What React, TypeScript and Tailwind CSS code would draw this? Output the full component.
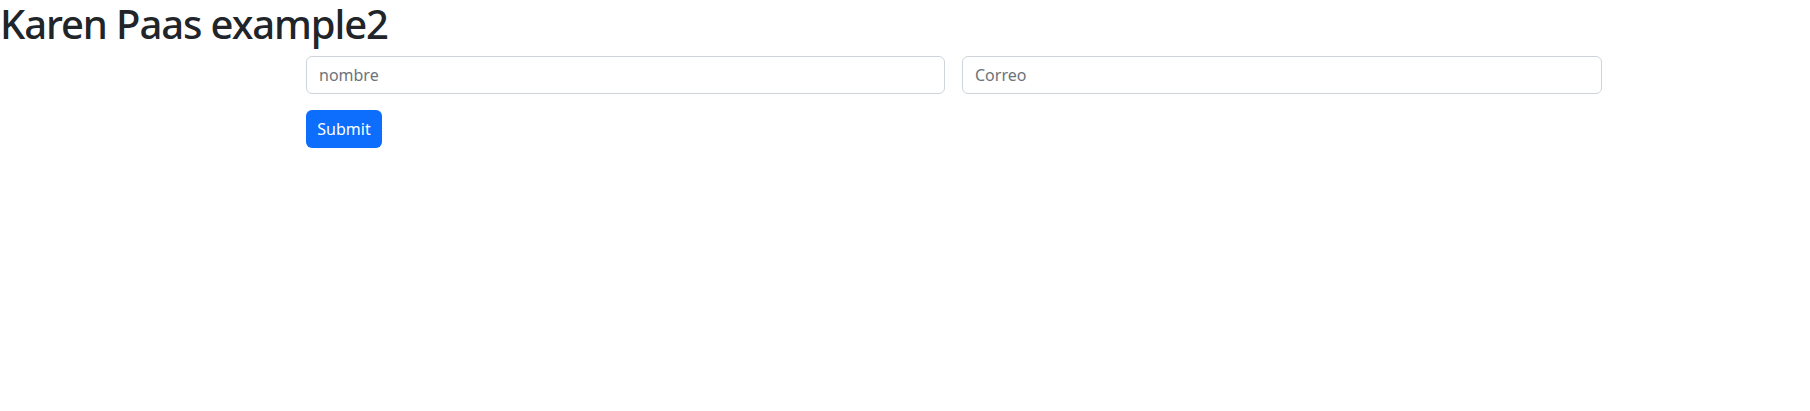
import React from "react";

const App = () => {
  return (
    <div className="min-h-[411px] bg-white text-[#212529] font-['Noto_Sans',sans-serif]">
      <h1 className="text-[40px] leading-[48px] font-medium mb-2 tracking-[-1.1px]">Karen Paas example2</h1>
      <form className="pl-[306px]" onSubmit={(e) => e.preventDefault()}>
        <div className="flex gap-[17px]">
          <input
            type="text"
            placeholder="nombre"
            className="w-[639px] h-[38px] px-3 border border-[#ced4da] rounded-md text-base placeholder:text-[#6c737a] outline-none"
          />
          <input
            type="email"
            placeholder="Correo"
            className="w-[640px] h-[38px] px-3 border border-[#ced4da] rounded-md text-base placeholder:text-[#6c737a] outline-none"
          />
        </div>
        <button
          type="submit"
          className="mt-4 w-[76px] h-[38px] bg-[#0d6efd] text-white text-base rounded-md"
        >
          Submit
        </button>
      </form>
    </div>
  );
};

export default App;
